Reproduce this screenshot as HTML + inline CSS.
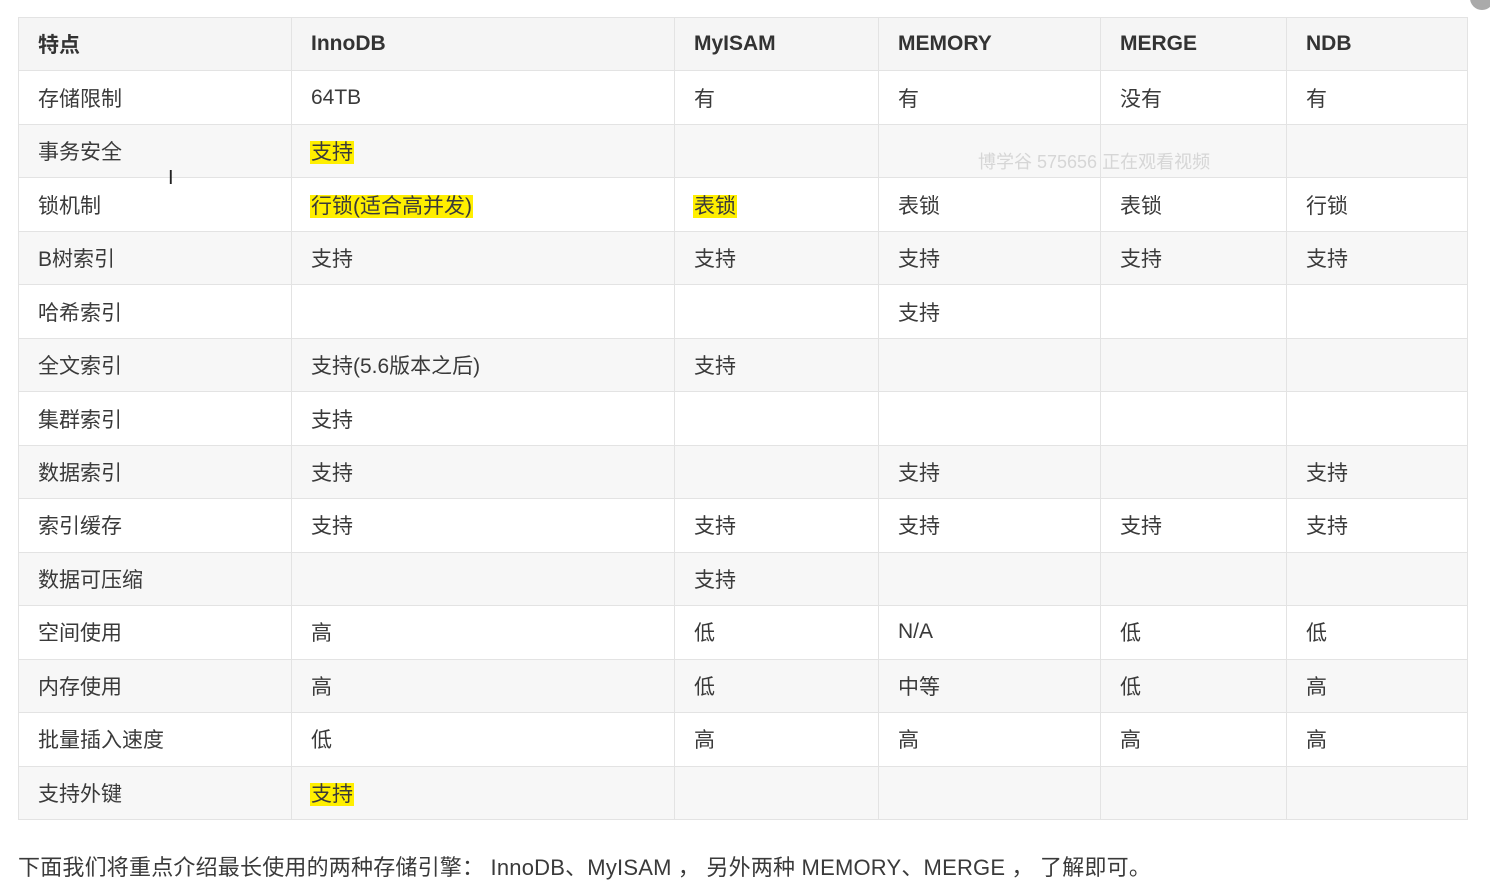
<!DOCTYPE html>
<html><head><meta charset="utf-8"><style>
body{margin:0;background:#fff;width:1490px;height:886px;overflow:hidden;font-family:"Liberation Sans","Noto Sans CJK SC",sans-serif;color:#3a3a3a}
table{position:absolute;left:18px;top:17px;border-collapse:collapse;table-layout:fixed;width:1449px}
td{border:1px solid #e3e3e3;height:53.47px;padding:0 0 0 19px;font-size:21px;white-space:nowrap;box-sizing:border-box}
tr:nth-child(odd) td{background:#f7f7f7}
tr:first-child td{background:#f5f5f5;font-weight:bold;color:#333}
.h{background:#ffef00;padding:0 1px;margin-left:-1px}
.wm{position:absolute;left:978px;top:148px;color:#d6d6d6;font-size:18px}
.p{position:absolute;left:18px;top:850px;font-size:22px;color:#3a3a3a;letter-spacing:0.2px}
.c{position:absolute;left:1470px;top:-14px;width:24px;height:24px;border-radius:50%;background:#aaa}
</style></head><body>
<div class="c"></div>
<table>
<colgroup><col style="width:273px"><col style="width:383px"><col style="width:204px"><col style="width:222px"><col style="width:186px"><col style="width:181px"></colgroup>
<tr><td>特点</td><td>InnoDB</td><td>MyISAM</td><td>MEMORY</td><td>MERGE</td><td>NDB</td></tr>
<tr><td>存储限制</td><td>64TB</td><td>有</td><td>有</td><td>没有</td><td>有</td></tr>
<tr><td>事务安全</td><td><span class="h">支持</span></td><td></td><td></td><td></td><td></td></tr>
<tr><td>锁机制</td><td><span class="h">行锁(适合高并发)</span></td><td><span class="h">表锁</span></td><td>表锁</td><td>表锁</td><td>行锁</td></tr>
<tr><td>B树索引</td><td>支持</td><td>支持</td><td>支持</td><td>支持</td><td>支持</td></tr>
<tr><td>哈希索引</td><td></td><td></td><td>支持</td><td></td><td></td></tr>
<tr><td>全文索引</td><td>支持(5.6版本之后)</td><td>支持</td><td></td><td></td><td></td></tr>
<tr><td>集群索引</td><td>支持</td><td></td><td></td><td></td><td></td></tr>
<tr><td>数据索引</td><td>支持</td><td></td><td>支持</td><td></td><td>支持</td></tr>
<tr><td>索引缓存</td><td>支持</td><td>支持</td><td>支持</td><td>支持</td><td>支持</td></tr>
<tr><td>数据可压缩</td><td></td><td>支持</td><td></td><td></td><td></td></tr>
<tr><td>空间使用</td><td>高</td><td>低</td><td>N/A</td><td>低</td><td>低</td></tr>
<tr><td>内存使用</td><td>高</td><td>低</td><td>中等</td><td>低</td><td>高</td></tr>
<tr><td>批量插入速度</td><td>低</td><td>高</td><td>高</td><td>高</td><td>高</td></tr>
<tr><td>支持外键</td><td><span class="h">支持</span></td><td></td><td></td><td></td><td></td></tr>
</table>
<div class="wm">博学谷 575656 正在观看视频</div>
<div class="p">下面我们将重点介绍最长使用的两种存储引擎： InnoDB、MyISAM ， 另外两种 MEMORY、MERGE ， 了解即可。</div>
<div style="position:absolute;left:168px;top:167px;font-size:20px;color:#222">I</div>
</body></html>
